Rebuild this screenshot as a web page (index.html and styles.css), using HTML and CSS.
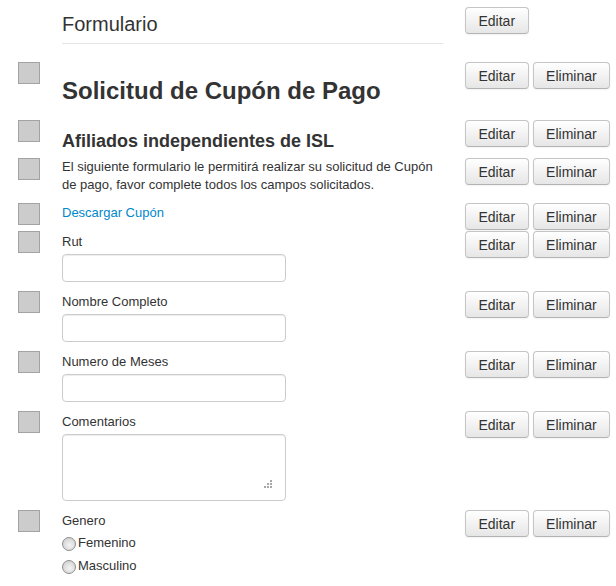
FILE: index.html
```html
<!DOCTYPE html>
<html lang="es">
<head>
    <meta charset="UTF-8">
    <title>Formulario</title>
    <link rel="stylesheet" href="styles.css">
</head>
<body>

    <!-- cabecera del formulario -->
    <div class="fila fila-titulo">
        <div></div>
        <div class="legend">Formulario</div>
        <div class="acciones acciones-titulo">
            <button class="btn">Editar</button>
        </div>
    </div>

    <div class="fila">
        <div class="handle"></div>
        <h1 class="titulo">Solicitud de Cupón de Pago</h1>
        <div class="acciones">
            <button class="btn">Editar</button>
            <button class="btn">Eliminar</button>
        </div>
    </div>

    <div class="fila">
        <div class="handle"></div>
        <h2 class="subtitulo">Afiliados independientes de ISL</h2>
        <div class="acciones">
            <button class="btn">Editar</button>
            <button class="btn">Eliminar</button>
        </div>
    </div>

    <div class="fila">
        <div class="handle"></div>
        <p class="texto">El siguiente formulario le permitirá realizar su solicitud de Cupón de pago, favor complete todos los campos solicitados.</p>
        <div class="acciones">
            <button class="btn">Editar</button>
            <button class="btn">Eliminar</button>
        </div>
    </div>

    <div class="fila">
        <div class="handle"></div>
        <p class="texto texto-link"><a href="#">Descargar Cupón</a></p>
        <div class="acciones">
            <button class="btn">Editar</button>
            <button class="btn">Eliminar</button>
        </div>
    </div>

    <!-- campos -->
    <div class="fila">
        <div class="handle"></div>
        <div class="campo">
            <label>Rut</label>
            <input type="text" class="input">
        </div>
        <div class="acciones">
            <button class="btn">Editar</button>
            <button class="btn">Eliminar</button>
        </div>
    </div>

    <div class="fila">
        <div class="handle"></div>
        <div class="campo">
            <label>Nombre Completo</label>
            <input type="text" class="input">
        </div>
        <div class="acciones">
            <button class="btn">Editar</button>
            <button class="btn">Eliminar</button>
        </div>
    </div>

    <div class="fila">
        <div class="handle"></div>
        <div class="campo">
            <label>Numero de Meses</label>
            <input type="text" class="input">
        </div>
        <div class="acciones">
            <button class="btn">Editar</button>
            <button class="btn">Eliminar</button>
        </div>
    </div>

    <div class="fila">
        <div class="handle"></div>
        <div class="campo">
            <label>Comentarios</label>
            <div class="area-wrap">
                <textarea class="input area"></textarea>
                <svg class="grip" width="10" height="10" viewBox="0 0 10 10">
                    <rect x="7" y="0" width="2" height="2" fill="#a8a8a8"/>
                    <rect x="4" y="3" width="2" height="2" fill="#a8a8a8"/>
                    <rect x="7" y="3" width="2" height="2" fill="#a8a8a8"/>
                    <rect x="1" y="6" width="2" height="2" fill="#a8a8a8"/>
                    <rect x="4" y="6" width="2" height="2" fill="#a8a8a8"/>
                    <rect x="7" y="6" width="2" height="2" fill="#a8a8a8"/>
                </svg>
            </div>
        </div>
        <div class="acciones">
            <button class="btn">Editar</button>
            <button class="btn">Eliminar</button>
        </div>
    </div>

    <div class="fila">
        <div class="handle"></div>
        <div class="campo">
            <label class="label-grupo">Genero</label>
            <label class="radio"><input type="radio" name="genero">Femenino</label>
            <label class="radio"><input type="radio" name="genero">Masculino</label>
        </div>
        <div class="acciones">
            <button class="btn">Editar</button>
            <button class="btn">Eliminar</button>
        </div>
    </div>

</body>
</html>
```

FILE: styles.css
```css
body {
    margin: 0;
    font-family: 'Liberation Sans', Arial, sans-serif;
    font-size: 13px;
    color: #333;
    background: #fff;
}

/* cada fila: cuadrado, contenido, botones */
.fila {
    display: grid;
    grid-template-columns: 22px 381px auto;
    column-gap: 22px;
    padding-left: 18px;
    align-items: start;
}

.fila-titulo {
    padding-top: 3px;
}

.handle {
    width: 22px;
    height: 22px;
    box-sizing: border-box;
    background: #ccc;
    border: 1px solid #a3a3a3;
}

.legend {
    font-size: 20px;
    line-height: 37px;
    padding-top: 3px;
    border-bottom: 1px solid #e5e5e5;
    margin-bottom: 18px;
}

.titulo {
    margin: 9px 0;
    font-size: 24px;
    line-height: 40px;
    font-weight: bold;
}

.subtitulo {
    margin: 4px 0 0;
    font-size: 18px;
    line-height: 34px;
    font-weight: bold;
}

.texto {
    margin: 0 0 9px;
    line-height: 18px;
}

.texto-link {
    padding-top: 1px;
    margin-bottom: 9px;
}

a {
    color: #0088cc;
    text-decoration: none;
}

.campo label {
    display: block;
    line-height: 18px;
    padding-top: 2px;
    margin-bottom: 3px;
}

.campo .label-grupo {
    margin-bottom: 1px;
}

.input {
    display: block;
    width: 224px;
    height: 28px;
    box-sizing: border-box;
    margin: 0 0 9px;
    border: 1px solid #ccc;
    border-radius: 4px;
    background: #fff;
    box-shadow: inset 0 1px 1px rgba(0, 0, 0, 0.075);
    font-family: inherit;
}

.area-wrap {
    position: relative;
    width: 224px;
}

.area {
    height: 67px;
    resize: none;
}

.grip {
    position: absolute;
    right: 13px;
    bottom: 11px;
}

.campo label.radio {
    display: flex;
    align-items: center;
    line-height: 23px;
    padding: 0;
    margin: 0;
}

.radio input {
    appearance: none;
    -webkit-appearance: none;
    width: 14px;
    height: 14px;
    margin: 3px 2px 0 0;
    border: 1px solid #8e8e8e;
    border-radius: 50%;
    background: radial-gradient(circle at 55% 60%, #f4f4f4 0%, #dcdcdc 55%, #c4c4c4 100%);
}

/* botones */
.acciones {
    display: flex;
    gap: 4px;
}

.acciones-titulo {
    margin-top: 4px;
}

.btn {
    height: 27px;
    padding: 0 12.5px;
    font-family: 'Liberation Sans', Arial, sans-serif;
    font-size: 14px;
    color: #333;
    background: linear-gradient(#ffffff, #e6e6e6);
    border: 1px solid #c5c5c5;
    border-bottom-color: #b3b3b3;
    border-radius: 4px;
    box-shadow: inset 0 1px 0 rgba(255, 255, 255, 0.2), 0 1px 2px rgba(0, 0, 0, 0.05);
    cursor: pointer;
}
```
